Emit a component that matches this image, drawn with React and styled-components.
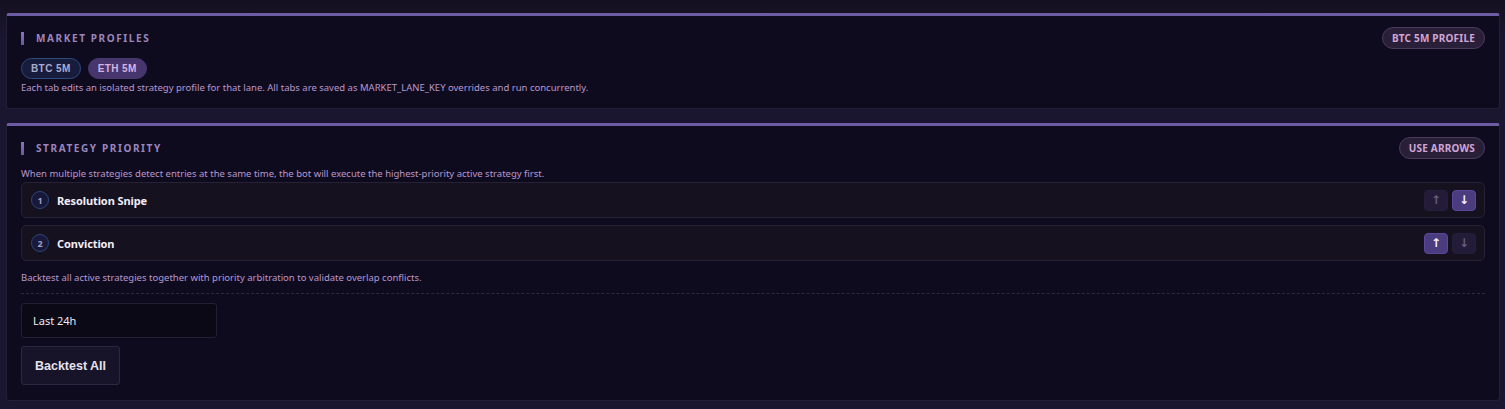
import React, { useState } from "react"
import styled, { createGlobalStyle } from "styled-components"

const GlobalStyle = createGlobalStyle`
    html, body {
        margin: 0;
        padding: 0;
        background: #1a1529;
        font-family: "Noto Sans", "Open Sans", sans-serif;
    }
    * { box-sizing: border-box; }
`

const Page = styled.div`
    min-height: 409px;
    padding: 13px 5px 8px 6px;
    display: flex;
    flex-direction: column;
    gap: 14px;
    background: linear-gradient(180deg, #14101f 0px, #1b1630 40px, #1b1630 100%);
`

const Card = styled.section`
    background: #0f0b1f;
    border: 1px solid #241e36;
    border-top: 3px solid #6d5ca3;
    border-radius: 3px;
    padding: ${p => p.$pad || "11px 14px 14px"};
`

const HeaderRow = styled.div`
    display: flex;
    align-items: center;
    justify-content: space-between;
    height: 22px;
`

const Title = styled.h2`
    margin: 0;
    display: flex;
    align-items: center;
    gap: 12px;
    font-size: 10px;
    font-weight: 700;
    letter-spacing: 1.6px;
    color: #9b86bb;
    text-transform: uppercase;

    &::before {
        content: "";
        width: 3px;
        height: 13px;
        background: linear-gradient(180deg, #8a73c0, #6a58a0);
    }
`

const Badge = styled.span`
    display: inline-flex;
    align-items: center;
    height: 22px;
    padding: 0 9px;
    border-radius: 11px;
    background: #2a1f38;
    border: 1px solid #4a3a5c;
    color: #d0a6d6;
    font-size: 10px;
    font-weight: 700;
    letter-spacing: 0.2px;
`

const Tabs = styled.div`
    display: flex;
    gap: 7px;
    margin-top: 9px;
`

const Tab = styled.button`
    height: 21px;
    padding: 0 9px;
    border-radius: 11px;
    font-family: "Liberation Sans", Arial, sans-serif;
    font-size: 10px;
    font-weight: 700;
    letter-spacing: 0.4px;
    cursor: pointer;
    border: 1px solid ${p => (p.$active ? "#2d4c7e" : "#4a3870")};
    background: ${p => (p.$active ? "#181c3c" : "#47356d")};
    color: ${p => (p.$active ? "#a9acd0" : "#d6b2e2")};
`

const Note = styled.p`
    margin: ${p => p.$m || "0"};
    font-size: 9.5px;
    line-height: 12px;
    color: #b997cc;
`

const List = styled.div`
    display: flex;
    flex-direction: column;
    gap: 7px;
    margin-top: 2px;
`

const Row = styled.div`
    display: flex;
    align-items: center;
    height: 36px;
    padding: 0 8px 0 9px;
    background: #15111f;
    border: 1px solid #272136;
    border-radius: 5px;
    gap: 8px;
`

const Num = styled.span`
    width: 18px;
    height: 18px;
    border-radius: 50%;
    border: 1.5px solid #2d4678;
    background: #17183a;
    color: #9ea2c6;
    font-size: 9px;
    font-weight: 700;
    display: flex;
    align-items: center;
    justify-content: center;
`

const Name = styled.span`
    flex: 1;
    color: #f1eef8;
    font-size: 11px;
    font-weight: 700;
    letter-spacing: -0.1px;
`

const Arrows = styled.div`
    display: flex;
    gap: 4px;
`

const ArrowBtn = styled.button`
    width: 24px;
    height: 21px;
    padding: 0;
    border-radius: 4px;
    border: 1px solid ${p => (p.$on ? "#58479a" : "#251e3a")};
    background: ${p => (p.$on ? "#4b3c80" : "#231c38")};
    color: ${p => (p.$on ? "#f4f0ff" : "#625c80")};
    font-family: "DejaVu Sans", sans-serif;
    font-size: 12px;
    font-weight: 700;
    display: flex;
    align-items: center;
    justify-content: center;
`

const Divider = styled.hr`
    margin: 9px 0 9px;
    border: 0;
    border-top: 1px dashed #2e2840;
`

const Select = styled.div`
    width: 196px;
    height: 35px;
    display: flex;
    align-items: center;
    padding: 0 11px;
    background: #0b0916;
    border: 1px solid #241f34;
    border-radius: 3px;
    color: #ece8f4;
    font-size: 11px;
`

const RunButton = styled.button`
    margin-top: 8px;
    width: 99px;
    height: 39px;
    background: #171329;
    border: 1px solid #2d2742;
    border-radius: 3px;
    color: #e6e2f0;
    font-family: "Liberation Sans", Arial, sans-serif;
    font-size: 12.5px;
    font-weight: 700;
    cursor: pointer;
    display: block;
`

const strategies = ["Resolution Snipe", "Conviction"]

export default function App() {
    const [lane, setLane] = useState("BTC")

    return (
        <>
            <GlobalStyle />
            <Page>
                <Card>
                    <HeaderRow>
                        <Title>Market Profiles</Title>
                        <Badge>{lane} 5M PROFILE</Badge>
                    </HeaderRow>
                    <Tabs>
                        <Tab $active={lane === "BTC"} onClick={() => setLane("BTC")}>BTC 5M</Tab>
                        <Tab $active={lane === "ETH"} onClick={() => setLane("ETH")}>ETH 5M</Tab>
                    </Tabs>
                    <Note $m="3px 0 0">
                        Each tab edits an isolated strategy profile for that lane. All tabs are saved as MARKET_LANE_KEY overrides and run concurrently.
                    </Note>
                </Card>

                <Card $pad="11px 14px 15px">
                    <HeaderRow>
                        <Title>Strategy Priority</Title>
                        <Badge>USE ARROWS</Badge>
                    </HeaderRow>
                    <Note $m="9px 0 0">
                        When multiple strategies detect entries at the same time, the bot will execute the highest-priority active strategy first.
                    </Note>
                    <List>
                        {strategies.map((s, i) => (
                            <Row key={s}>
                                <Num>{i + 1}</Num>
                                <Name>{s}</Name>
                                <Arrows>
                                    <ArrowBtn $on={i > 0}>↑</ArrowBtn>
                                    <ArrowBtn $on={i < strategies.length - 1}>↓</ArrowBtn>
                                </Arrows>
                            </Row>
                        ))}
                    </List>
                    <Note $m="11px 0 0">
                        Backtest all active strategies together with priority arbitration to validate overlap conflicts.
                    </Note>
                    <Divider />
                    <Select>Last 24h</Select>
                    <RunButton>Backtest All</RunButton>
                </Card>
            </Page>
        </>
    )
}
